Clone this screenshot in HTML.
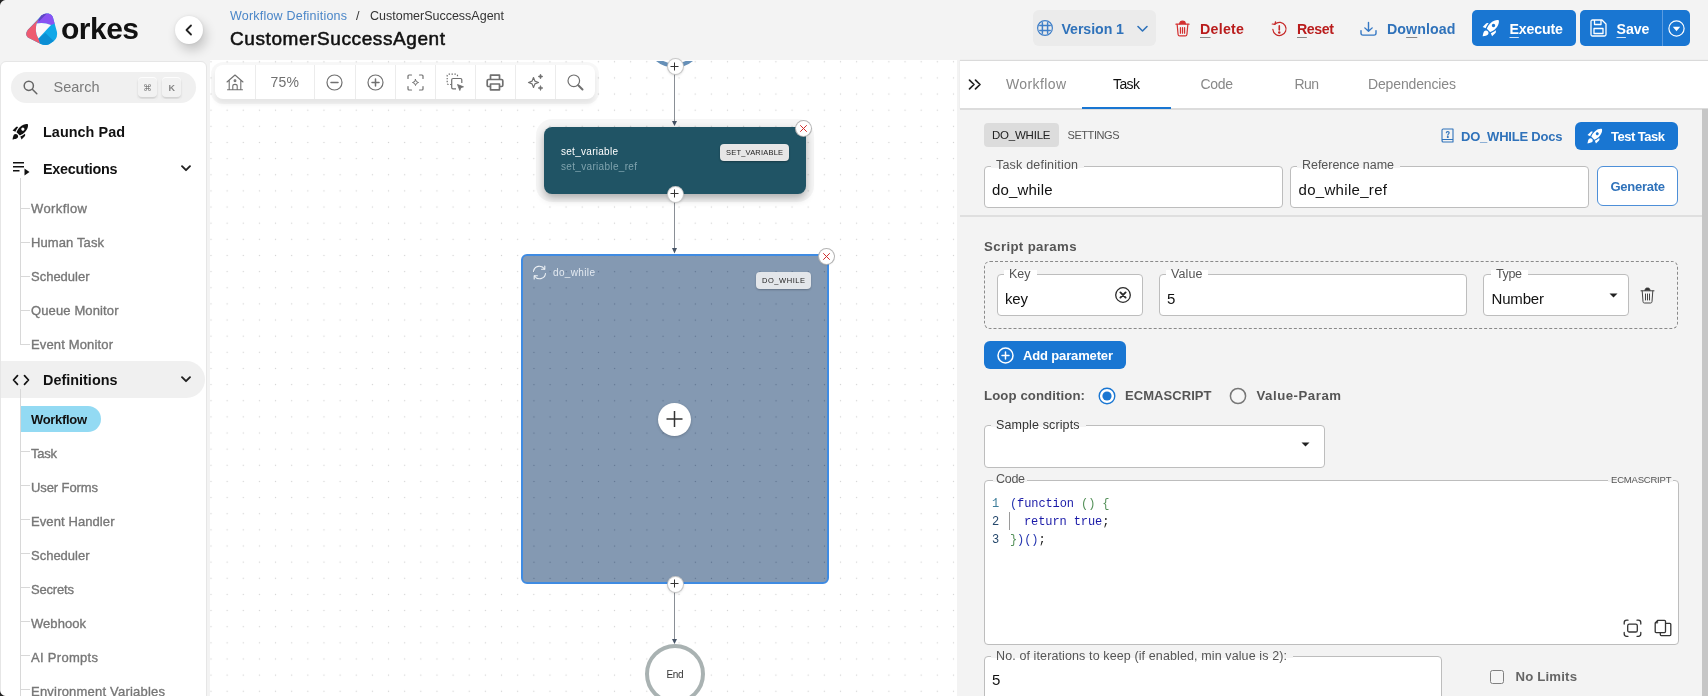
<!DOCTYPE html>
<html lang="en"><head><meta charset="utf-8"><title>CustomerSuccessAgent - Orkes</title>
<style>
*{box-sizing:border-box;margin:0;padding:0}
html,body{width:1708px;height:696px;overflow:hidden;background:#f3f3f3;font-family:"Liberation Sans",sans-serif}
.a{position:absolute}
.t{position:absolute;white-space:nowrap;display:block}
svg{position:absolute;overflow:visible}
#side{left:0;top:61px;width:207px;height:640px;background:#fff;border:1px solid #e6e6e6;border-radius:6px 6px 0 0}
#canvas{left:210px;top:60px;width:747px;height:640px;background-color:#fff;background-image:radial-gradient(circle,#d2d2d2 0.5px,transparent 1px);background-size:16.15px 16.15px;background-position:-7.1px -6.3px;overflow:hidden}
#panel{left:960px;top:61px;width:748px;height:640px;background:#f3f3f3}
#tabs{left:960px;top:61px;width:748px;height:49px;background:#fff;border-bottom:2px solid #dcdcdc;box-shadow:0 -1px 1px rgba(0,0,0,.1)}
.field{position:absolute;background:#fff;border:1px solid #bdbdbd;border-radius:4px}
.lblbg{position:absolute;height:4px}
.btn{position:absolute;background:#1976d2;border-radius:5px}
.circ{position:absolute;border-radius:50%;background:#fff}
#texts{position:absolute;left:0;top:0;width:1708px;height:696px;will-change:transform}
u{text-underline-offset:3px;text-decoration-thickness:1.300px;text-decoration-color:rgba(100,100,100,.75)}

</style></head>
<body>
<!-- header -->
<div class="a" id="hdr" style="left:0;top:0;width:1708px;height:61px;background:#f3f3f3"></div>
<svg style="left:20px;top:8px" width="60" height="44" viewBox="0 0 949 696">
  <path d="M340 120Q390 80 450 88Q515 100 530 180L585 380Q600 460 540 520L460 575Q400 600 320 565L125 465Q70 420 125 345Z" fill="#10a8e8"/>
  <path d="M290 180L340 120Q390 80 450 88Q515 100 530 180L548 250L490 268Q380 225 265 245Z" fill="#8a52f2"/>
  <path d="M290 180L340 120Q380 88 425 87L300 215Z" fill="#6046c2"/>
  <path d="M292 178L125 345Q70 420 125 465L320 565L292 482Q225 370 265 245Z" fill="#ee5a70"/>
  <path d="M292 482L400 395L535 522L460 575Q400 600 320 565Z" fill="#0b8ed4"/>
  <path d="M265 245Q380 225 490 268L292 482Q225 370 265 245Z" fill="#fbf6fa"/>
</svg>
<div class="circ" style="left:175px;top:16px;width:28px;height:28px;box-shadow:3px 6px 12px rgba(0,0,0,.2),0 0 3px rgba(0,0,0,.08)"></div>
<svg style="left:183px;top:23px" width="12" height="14" viewBox="0 0 12 14"><path d="M8 2.500 L3.500 7 L8 11.500" fill="none" stroke="#222" stroke-width="1.800" stroke-linecap="round" stroke-linejoin="round"/></svg>

<!-- header actions -->
<div class="a" style="left:1033px;top:10px;width:123px;height:36px;background:#ebebeb;border-radius:6px"></div>
<svg style="left:1037px;top:20.400px" width="16" height="16" viewBox="0 0 16 16" fill="none" stroke="#3f7fc8" stroke-width="1.200" stroke-linecap="round"><circle cx="8" cy="8" r="7.400"/><path d="M5.400 2.800V13.200M10.600 2.800V13.200M2.800 5.400H13.200M2.800 10.600H13.200" stroke-width="1.500"/></svg>
<svg style="left:1137px;top:25px" width="11" height="8" viewBox="0 0 11 8"><path d="M1 1.500 L5.500 6 L10 1.500" fill="none" stroke="#2f72ba" stroke-width="1.600" stroke-linecap="round" stroke-linejoin="round"/></svg>
<!-- delete icon -->
<svg style="left:1174.500px;top:20px" width="15" height="16.900" viewBox="0 0 16 18" fill="none" stroke="#d32f2f" stroke-width="1.300" stroke-linecap="round" stroke-linejoin="round"><path d="M1 4.500H15"/><path d="M5 4.200C5 1.800 6.500 1.200 8 1.200S11 1.800 11 4.200" fill="#d32f2f"/><path d="M2.300 4.800 L3.300 15.500 C3.400 16.500 4 17 5 17 H11 C12 17 12.600 16.500 12.700 15.500 L13.700 4.800"/><path d="M5.800 8V14M8 8V14M10.200 8V14"/></svg>
<!-- reset icon -->
<svg style="left:1270.500px;top:20.800px" width="16" height="16" viewBox="0 0 17 17" fill="none" stroke="#c62828" stroke-width="1.300" stroke-linecap="round"><path d="M4.200 3.300 A7 7 0 1 1 2 9" /><path d="M4.800 0.800 L4.200 3.600 L1.300 3.200" stroke-linejoin="round"/><path d="M8.800 5.200V9.600" stroke-width="1.700"/><circle cx="8.800" cy="12.300" r="0.700" fill="#c62828"/></svg>
<!-- download icon -->
<svg style="left:1360px;top:20.800px" width="17" height="15.500" viewBox="0 0 17 17" preserveAspectRatio="none" fill="none" stroke="#3578c4" stroke-width="1.400" stroke-linecap="round" stroke-linejoin="round"><path d="M8.500 1.500V11M4.800 7.500 L8.500 11.200 L12.200 7.500"/><path d="M1 10.500V13.500C1 14.800 1.800 15.500 3 15.500H14C15.200 15.500 16 14.800 16 13.500V10.500"/></svg>
<div class="btn" style="left:1472px;top:10px;width:104px;height:36px"></div>
<svg style="left:1481px;top:18px" width="20" height="20" viewBox="0 0 24 24"><path fill="#fff" d="M9.190 6.350c-2.040 2.290-3.440 5.580-3.570 5.890L2 10.690l4.050-4.050c.47-.47 1.150-.68 1.810-.55l1.330.26zM11.170 17s3.740-1.550 5.890-3.700c5.400-5.400 4.500-9.620 4.210-10.570-.95-.3-5.170-1.190-10.570 4.210C8.550 9.090 7 12.830 7 12.830L11.170 17zm6.480-2.190c-2.290 2.040-5.580 3.440-5.890 3.570L13.310 22l4.050-4.050c.47-.47.680-1.150.55-1.810l-.26-1.330zM9 18c0 .830-.340 1.580-.880 2.120C6.940 21.300 2 22 2 22s.7-4.940 1.880-6.120C4.420 15.340 5.170 15 6 15c1.660 0 3 1.340 3 3zm4-9c0-1.100.9-2 2-2s2 .9 2 2-.9 2-2 2-2-.9-2-2z"/></svg>
<div class="btn" style="left:1580px;top:10px;width:110px;height:36px"></div>
<div class="a" style="left:1662px;top:10px;width:1px;height:36px;background:#5a9be0"></div>
<svg style="left:1590px;top:19px" width="17" height="18" viewBox="0 0 17 18" fill="none" stroke="#fff" stroke-width="1.300" stroke-linejoin="round"><path d="M1 2.500C1 1.600 1.600 1 2.500 1H12L16 5V15.500C16 16.400 15.400 17 14.500 17H2.500C1.600 17 1 16.400 1 15.500Z"/><path d="M4.500 1V5.500H11V1"/><rect x="4" y="9.500" width="9" height="5"/></svg>
<svg style="left:1668px;top:20px" width="17" height="17" viewBox="0 0 17 17"><circle cx="8.500" cy="8.500" r="7.600" fill="none" stroke="#fff" stroke-width="1.200"/><path d="M4.800 6.800H12.200L8.500 11.300Z" fill="#fff"/></svg>

<!-- sidebar -->
<div class="a" id="side"></div>
<div class="a" style="left:11px;top:72px;width:185px;height:31px;border-radius:16px;background:#f0f0f0"></div>
<svg style="left:23px;top:80px" width="15" height="15" viewBox="0 0 15 15" fill="none" stroke="#666" stroke-width="1.500" stroke-linecap="round"><circle cx="5.800" cy="5.800" r="4.600"/><path d="M9.300 9.300L13.800 13.800"/></svg>
<div class="a" style="left:138px;top:78px;width:19px;height:19px;border-radius:4px;background:#f2f2f2;box-shadow:0 -1px 0 rgba(255,255,255,.85),0 1.500px 2px rgba(0,0,0,.17),0 3px 1px rgba(255,255,255,.75)"></div>
<div class="a" style="left:162px;top:78px;width:19px;height:19px;border-radius:4px;background:#f2f2f2;box-shadow:0 -1px 0 rgba(255,255,255,.85),0 1.500px 2px rgba(0,0,0,.17),0 3px 1px rgba(255,255,255,.75)"></div>
<!-- launch pad icon -->
<svg style="left:11px;top:122px" width="19" height="19" viewBox="0 0 24 24"><path fill="#111" d="M9.190 6.350c-2.040 2.290-3.440 5.580-3.570 5.890L2 10.690l4.050-4.050c.47-.47 1.150-.68 1.810-.55l1.330.26zM11.170 17s3.740-1.550 5.890-3.700c5.400-5.400 4.500-9.620 4.210-10.570-.95-.3-5.170-1.190-10.570 4.210C8.550 9.090 7 12.830 7 12.830L11.170 17zm6.480-2.190c-2.290 2.040-5.580 3.440-5.890 3.570L13.310 22l4.050-4.050c.47-.47.680-1.150.55-1.810l-.26-1.330zM9 18c0 .830-.340 1.580-.880 2.120C6.940 21.300 2 22 2 22s.7-4.940 1.880-6.120C4.420 15.340 5.170 15 6 15c1.660 0 3 1.340 3 3zm4-9c0-1.100.9-2 2-2s2 .9 2 2-.9 2-2 2-2-.9-2-2z"/></svg>
<!-- executions icon -->
<svg style="left:13px;top:161px" width="17" height="15" viewBox="0 0 17 15"><path d="M0 1.800H11M0 5.800H11M0 9.800H6.500" stroke="#111" stroke-width="1.600" fill="none"/><path d="M11.500 7.500V14.500L16.500 11Z" fill="#111"/></svg>
<svg style="left:180.500px;top:165px" width="10" height="7" viewBox="0 0 10 7"><path d="M1 1.200 L5 5.200 L9 1.200" fill="none" stroke="#222" stroke-width="1.900" stroke-linecap="round" stroke-linejoin="round"/></svg>
<!-- tree lines executions -->
<div class="a" style="left:20px;top:178px;width:1px;height:167px;background:#d8d8d8"></div>
<div class="a" style="left:20px;top:208px;width:10px;height:1px;background:#d8d8d8"></div>
<div class="a" style="left:20px;top:242px;width:10px;height:1px;background:#d8d8d8"></div>
<div class="a" style="left:20px;top:276px;width:10px;height:1px;background:#d8d8d8"></div>
<div class="a" style="left:20px;top:310px;width:10px;height:1px;background:#d8d8d8"></div>
<div class="a" style="left:20px;top:344px;width:10px;height:1px;background:#d8d8d8"></div>
<!-- definitions row -->
<div class="a" style="left:1px;top:361px;width:204px;height:37px;border-radius:0 18.500px 18.500px 0;background:#f0f0f0"></div>
<svg style="left:12px;top:374px" width="18" height="12" viewBox="0 0 18 12" fill="none" stroke="#111" stroke-width="1.700" stroke-linecap="round" stroke-linejoin="round"><path d="M5.500 1.700L1.500 6L5.500 10.300M12.500 1.700L16.500 6L12.500 10.300"/></svg>
<svg style="left:180.500px;top:376px" width="10" height="7" viewBox="0 0 10 7"><path d="M1 1.200 L5 5.200 L9 1.200" fill="none" stroke="#222" stroke-width="1.900" stroke-linecap="round" stroke-linejoin="round"/></svg>
<div class="a" style="left:20px;top:389px;width:1px;height:310px;background:#d8d8d8"></div>
<div class="a" style="left:21px;top:406px;width:80px;height:26px;border-radius:0 13px 13px 0;background:#93daf3"></div>
<div class="a" style="left:20px;top:451px;width:10px;height:1px;background:#d8d8d8"></div>
<div class="a" style="left:20px;top:485px;width:10px;height:1px;background:#d8d8d8"></div>
<div class="a" style="left:20px;top:519px;width:10px;height:1px;background:#d8d8d8"></div>
<div class="a" style="left:20px;top:553px;width:10px;height:1px;background:#d8d8d8"></div>
<div class="a" style="left:20px;top:587px;width:10px;height:1px;background:#d8d8d8"></div>
<div class="a" style="left:20px;top:621px;width:10px;height:1px;background:#d8d8d8"></div>
<div class="a" style="left:20px;top:655px;width:10px;height:1px;background:#d8d8d8"></div>
<div class="a" style="left:20px;top:689px;width:10px;height:1px;background:#d8d8d8"></div>

<!-- canvas -->
<div class="a" id="canvas"></div>
<!-- start node arc -->
<svg style="left:650px;top:61px;overflow:hidden" width="50" height="14" viewBox="650 61 50 14"><circle cx="674.500" cy="38" r="27.500" fill="#fff" stroke="#6690b8" stroke-width="4"/></svg>
<!-- edges -->
<svg style="left:660px;top:61px" width="30" height="600" viewBox="660 61 30 600" fill="none" stroke="#8a8f96" stroke-width="1">
 <path d="M674.500 73V121M674.500 200V248M674.500 591V639"/>
 <path d="M672 121H677L674.500 126Z M672 248H677L674.500 253.500Z M672 639H677L674.500 644Z" fill="#465366" stroke="none"/>
</svg>
<!-- set_variable node -->
<div class="a" style="left:544px;top:127px;width:262px;height:67px;border-radius:8px;background:#205465;box-shadow:0 0 0 8px rgba(0,0,0,.035),0 4px 9px rgba(0,0,0,.3)"></div>
<div class="a" style="left:720px;top:144px;width:69px;height:17px;border-radius:4px;background:#e6e6e6;box-shadow:0 1px 2px rgba(0,0,0,.3)"></div>
<!-- do_while node -->
<div class="a" style="left:521px;top:254px;width:308px;height:330px;border-radius:6px;background-color:rgba(110,135,165,.85);background-image:radial-gradient(circle,rgba(70,90,120,.55) 0.500px,transparent 1px);background-size:16.150px 16.150px;background-position:2.900px 7.650px;border:2px solid #3f8be2"></div>
<div class="a" style="left:756px;top:272px;width:55px;height:17px;border-radius:4px;background:#e3e6ea;box-shadow:0 1px 2px rgba(0,0,0,.25)"></div>
<svg style="left:532px;top:265px" width="15" height="15" viewBox="0 0 15 15" fill="none" stroke="#eef2f6" stroke-width="1.100" stroke-linecap="round" stroke-linejoin="round"><path d="M1.500 6.500A6 6 0 0 1 12.500 4M13.500 8.500A6 6 0 0 1 2.500 11"/><path d="M12.800 1V4.200H9.600M2.200 14V10.800H5.400"/></svg>
<!-- plus buttons -->
<div class="circ" style="left:667.500px;top:59px;width:15px;height:15px;box-shadow:0 0 0 1px #c9c9c9,0 1px 3px rgba(0,0,0,.25)"></div>
<div class="circ" style="left:667.500px;top:186.500px;width:15px;height:15px;box-shadow:0 0 0 1px #c9c9c9,0 1px 3px rgba(0,0,0,.25)"></div>
<div class="circ" style="left:667.500px;top:576.500px;width:15px;height:15px;box-shadow:0 0 0 1px #c9c9c9,0 1px 3px rgba(0,0,0,.25)"></div>
<div class="circ" style="left:658px;top:402.500px;width:33px;height:33px;box-shadow:0 1px 3px rgba(0,0,0,.2)"></div>
<svg style="left:660px;top:55px" width="30" height="540" viewBox="660 55 30 540" fill="none" stroke="#333" stroke-width="1">
 <path d="M670.500 66.500H678.500M674.500 62.500V70.500"/>
 <path d="M670.500 193.500H678.500M674.500 189.500V197.500"/>
 <path d="M670.500 583.500H678.500M674.500 579.500V587.500"/>
 <path d="M666.500 419H682.500M674.500 411V427" stroke-width="1.500"/>
</svg>
<!-- close buttons -->
<div class="circ" style="left:796px;top:121px;width:15px;height:15px;box-shadow:0 0 0 1px #b4b4b4,0 1px 2px rgba(0,0,0,.15)"></div>
<div class="circ" style="left:819px;top:249px;width:15px;height:15px;box-shadow:0 0 0 1px #b4b4b4,0 1px 2px rgba(0,0,0,.15)"></div>
<svg style="left:796px;top:121px" width="40" height="145" viewBox="796 121 40 145" fill="none" stroke="#cf2e2e" stroke-width="1" stroke-linecap="round"><path d="M800.500 125.500L806.500 131.500M806.500 125.500L800.500 131.500M823.500 253.500L829.500 259.500M829.500 253.500L823.500 259.500"/></svg>
<!-- end node -->
<div class="circ" style="left:644.500px;top:644px;width:60px;height:60px;border:4px solid #a9b2b2"></div>
<!-- toolbar -->
<div class="a" style="left:215px;top:65px;width:380px;height:34px;border-radius:8px;background:#fff;box-shadow:0 1px 0 4px rgba(0,0,0,.03),0 5px 5px rgba(0,0,0,.07)"></div>
<div class="a" style="left:255px;top:65px;width:1px;height:34px;background:#ececec"></div>
<div class="a" style="left:314px;top:65px;width:1px;height:34px;background:#ececec"></div>
<div class="a" style="left:355px;top:65px;width:1px;height:34px;background:#ececec"></div>
<div class="a" style="left:395px;top:65px;width:1px;height:34px;background:#ececec"></div>
<div class="a" style="left:435px;top:65px;width:1px;height:34px;background:#ececec"></div>
<div class="a" style="left:475px;top:65px;width:1px;height:34px;background:#ececec"></div>
<div class="a" style="left:515px;top:65px;width:1px;height:34px;background:#ececec"></div>
<div class="a" style="left:555px;top:65px;width:1px;height:34px;background:#ececec"></div>
<!-- toolbar icons -->
<svg style="left:226px;top:74px" width="18" height="17" viewBox="0 0 18 17" fill="none" stroke="#707070" stroke-width="1.100" stroke-linecap="round" stroke-linejoin="round"><path d="M1 8L9 1L17 8M3.200 6.500V15.500M14.800 6.500V15.500M1.500 15.800H16.500M6.800 15.500V12C6.800 9.800 11.200 9.800 11.200 12V15.500"/><circle cx="9" cy="6.800" r="0.900"/></svg>
<svg style="left:326px;top:74px" width="17" height="17" viewBox="0 0 17 17" fill="none" stroke="#707070" stroke-width="1.200" stroke-linecap="round"><circle cx="8.500" cy="8.500" r="7.500"/><path d="M5 8.500H12" stroke-width="1.500"/></svg>
<svg style="left:367px;top:74px" width="17" height="17" viewBox="0 0 17 17" fill="none" stroke="#707070" stroke-width="1.200" stroke-linecap="round"><circle cx="8.500" cy="8.500" r="7.500"/><path d="M5 8.500H12M8.500 5V12" stroke-width="1.500"/></svg>
<svg style="left:407px;top:74px" width="17" height="17" viewBox="0 0 17 17" fill="none" stroke="#707070" stroke-width="1.200" stroke-linecap="round" stroke-linejoin="round"><path d="M1 4.500V2C1 1.400 1.400 1 2 1H4.500M12.500 1H15C15.600 1 16 1.400 16 2V4.500M16 12.500V15C16 15.600 15.600 16 15 16H12.500M4.500 16H2C1.400 16 1 15.600 1 15V12.500"/><path d="M8.500 5.500L9.400 7.600L11.500 8.500L9.400 9.400L8.500 11.500L7.600 9.400L5.500 8.500L7.600 7.600Z" stroke-width="1"/></svg>
<svg style="left:446px;top:73px" width="19" height="19" viewBox="0 0 19 19" fill="none" stroke="#707070" stroke-width="1.200" stroke-linejoin="round"><path d="M5.500 11.500H2.500C1.700 11.500 1.200 11 1.200 10.200V2.500C1.200 1.700 1.700 1.200 2.500 1.200H10.200C11 1.200 11.500 1.700 11.500 2.500V4.500" stroke-dasharray="1.400 1.500"/><path d="M15.800 10V6.800C15.800 6 15.300 5.500 14.500 5.500H7C6.200 5.500 5.700 6 5.700 6.800V14.500C5.700 15.300 6.200 15.800 7 15.800H10"/><path d="M11.500 11.500L17.500 13.800L14.800 14.800L13.800 17.500Z" fill="#707070" stroke-width="0.800"/></svg>
<svg style="left:486px;top:74px" width="18" height="17" viewBox="0 0 18 17" fill="none" stroke="#707070" stroke-width="1.700" stroke-linejoin="round"><path d="M4.500 5V1.200H13.500V5"/><path d="M4.500 12.500H2.500C1.700 12.500 1.200 12 1.200 11.200V6.800C1.200 6 1.700 5.500 2.500 5.500H15.500C16.300 5.500 16.800 6 16.800 6.800V11.200C16.800 12 16.300 12.500 15.500 12.500H13.500"/><rect x="4.500" y="10" width="9" height="5.800"/></svg>
<svg style="left:526px;top:73px" width="19" height="19" viewBox="0 0 19 19" fill="none" stroke="#707070" stroke-width="1.200" stroke-linejoin="round"><path d="M7.500 4.500L8.900 8.100L12.500 9.500L8.900 10.900L7.500 14.500L6.100 10.900L2.500 9.500L6.100 8.100Z"/><path d="M14.500 1L15.200 2.800L17 3.500L15.200 4.200L14.500 6L13.800 4.200L12 3.500L13.800 2.800Z M14.500 12.500L15.200 14.300L17 15L15.200 15.700L14.500 17.500L13.800 15.700L12 15L13.800 14.300Z" fill="#707070" stroke-width="0.600"/></svg>
<svg style="left:567px;top:74px" width="17" height="17" viewBox="0 0 17 17" fill="none" stroke="#707070" stroke-width="1.200" stroke-linecap="round"><circle cx="6.800" cy="6.800" r="5.800"/><path d="M11.200 11.200L15.500 15.500" stroke-width="2"/></svg>

<!-- right panel -->
<div class="a" id="panel"></div>
<div class="a" id="tabs"></div>
<div class="a" style="left:1082px;top:107px;width:89px;height:2px;background:#1976d2"></div>
<svg style="left:968px;top:79px" width="14" height="11" viewBox="0 0 14 11" fill="none" stroke="#222" stroke-width="1.700" stroke-linecap="round" stroke-linejoin="round"><path d="M1.500 1.200L6 5.500L1.500 9.800M7.500 1.200L12 5.500L7.500 9.800"/></svg>
<div class="a" style="left:1702px;top:109px;width:6px;height:600px;background:#c6c6c6"></div>
<div class="a" style="left:984px;top:123px;width:75px;height:24px;border-radius:4px;background:#dcdcdc"></div>
<!-- docs icon -->
<svg style="left:1441px;top:128px" width="13" height="15" viewBox="0 0 13 15" fill="none" stroke="#2f72ba" stroke-width="1.100" stroke-linejoin="round"><path d="M1 2.200C1 1.400 1.500 1 2.200 1H12V11.500H2.200C1.500 11.500 1 12 1 12.700V2.200ZM1 12.700C1 13.500 1.500 14 2.200 14H12V11.500"/><path d="M5.300 4.800C5.300 3.200 8.200 3.200 8.200 4.800C8.200 5.800 6.800 5.900 6.800 7.200" stroke-linecap="round"/><circle cx="6.800" cy="9" r="0.500" fill="#2f72ba"/></svg>
<div class="btn" style="left:1575px;top:121.500px;width:103px;height:28px;border-radius:6px"></div>
<svg style="left:1586px;top:126.500px" width="18" height="18" viewBox="0 0 24 24"><path fill="#fff" d="M9.190 6.350c-2.040 2.290-3.440 5.580-3.570 5.890L2 10.690l4.050-4.050c.47-.47 1.150-.68 1.810-.55l1.330.26zM11.170 17s3.740-1.550 5.890-3.700c5.400-5.400 4.500-9.620 4.210-10.570-.95-.3-5.170-1.190-10.570 4.210C8.550 9.090 7 12.830 7 12.830L11.170 17zm6.480-2.190c-2.290 2.040-5.580 3.440-5.890 3.570L13.310 22l4.050-4.050c.47-.47.680-1.150.55-1.810l-.26-1.330zM9 18c0 .830-.340 1.580-.880 2.120C6.940 21.300 2 22 2 22s.7-4.940 1.880-6.120C4.420 15.340 5.170 15 6 15c1.660 0 3 1.340 3 3zm4-9c0-1.100.9-2 2-2s2 .9 2 2-.9 2-2 2-2-.9-2-2z"/></svg>
<!-- task def / ref name -->
<div class="field" style="left:984px;top:166px;width:299px;height:42px"></div>
<div class="lblbg" style="left:991px;top:164px;width:93px;background:#f3f3f3"></div>
<div class="field" style="left:1290px;top:166px;width:299px;height:42px"></div>
<div class="lblbg" style="left:1297px;top:164px;width:103px;background:#f3f3f3"></div>
<div class="field" style="left:1597px;top:166px;width:81px;height:40px;border-color:#4d8fd8;border-radius:6px"></div>
<div class="a" style="left:960px;top:215px;width:742px;height:2px;background:#dfdfdf"></div>
<!-- script params -->
<div class="a" style="left:984px;top:261px;width:694px;height:68px;border:1px dashed #8a8a8a;border-radius:6px"></div>
<div class="field" style="left:997px;top:274px;width:146px;height:42px"></div>
<div class="lblbg" style="left:1004px;top:270px;width:33px;height:6px;background:#fff"></div>
<div class="field" style="left:1159px;top:274px;width:308px;height:42px"></div>
<div class="lblbg" style="left:1166px;top:270px;width:42px;height:6px;background:#fff"></div>
<div class="field" style="left:1483px;top:274px;width:146px;height:42px"></div>
<div class="lblbg" style="left:1491px;top:270px;width:37px;height:6px;background:#fff"></div>
<svg style="left:1115px;top:287px" width="16" height="16" viewBox="0 0 16 16" fill="none" stroke="#2a2a2a" stroke-width="1.300" stroke-linecap="round"><circle cx="8" cy="8" r="7.300"/><path d="M5.400 5.400L10.600 10.600M10.600 5.400L5.400 10.600" stroke-width="1.900"/></svg>
<svg style="left:1608.500px;top:293px" width="9" height="5" viewBox="0 0 9 5"><path d="M0.500 0.500H8.500L4.500 4.500Z" fill="#222"/></svg>
<svg style="left:1640px;top:286.500px" width="15" height="17" viewBox="0 0 15 17" fill="none" stroke="#3a3a3a" stroke-width="0.950" stroke-linecap="round" stroke-linejoin="round"><path d="M1 3.800H14"/><path d="M5 3.500C5 1.500 6 1 7.500 1S10 1.500 10 3.500" fill="#333"/><path d="M2.200 4L3 14.500C3.100 15.500 3.600 16 4.500 16H10.500C11.400 16 11.900 15.500 12 14.500L12.800 4"/><path d="M5.500 7V13M7.500 7V13M9.500 7V13"/></svg>
<!-- add parameter -->
<div class="btn" style="left:984px;top:341px;width:142px;height:27.500px;border-radius:6px"></div>
<svg style="left:996.500px;top:346.500px" width="17" height="17" viewBox="0 0 17 17" fill="none" stroke="#fff" stroke-width="1.500" stroke-linecap="round"><circle cx="8.500" cy="8.500" r="7.500"/><path d="M5 8.500H12M8.500 5V12"/></svg>
<!-- radios -->
<svg style="left:1098px;top:387px" width="18" height="18" viewBox="0 0 18 18"><circle cx="9" cy="9" r="7.800" fill="#fff" stroke="#1976d2" stroke-width="1.400"/><circle cx="9" cy="9" r="4.600" fill="#1976d2"/></svg>
<svg style="left:1229px;top:387px" width="18" height="18" viewBox="0 0 18 18"><circle cx="9" cy="9" r="7.600" fill="#f6f6f6" stroke="#777" stroke-width="1.500"/></svg>
<!-- sample scripts -->
<div class="field" style="left:984px;top:425px;width:341px;height:43px"></div>
<div class="lblbg" style="left:991px;top:423px;width:95px;background:#f3f3f3"></div>
<svg style="left:1301px;top:442px" width="9" height="5" viewBox="0 0 9 5"><path d="M0.500 0.500H8.500L4.500 4.500Z" fill="#222"/></svg>
<!-- code box -->
<div class="field" style="left:984px;top:480px;width:695px;height:165px"></div>
<div class="lblbg" style="left:993px;top:478px;width:34px;background:#f3f3f3"></div>
<div class="lblbg" style="left:1608px;top:478px;width:65px;background:#f3f3f3"></div>
<div class="a" style="left:1009px;top:512px;width:1px;height:18px;background:#9a9a9a"></div>
<svg style="left:1623px;top:619px" width="19" height="19" viewBox="0 0 19 19" fill="none" stroke="#333" stroke-width="1.300" stroke-linecap="round" stroke-linejoin="round"><path d="M1.200 5V3.700C1.200 2.200 2.200 1.200 3.700 1.200H5M14 1.200H15.300C16.800 1.200 17.800 2.200 17.800 3.700V5M17.800 13.500V14.800C17.800 16.300 16.800 17.300 15.300 17.300H14M5 17.300H3.700C2.200 17.300 1.200 16.300 1.200 14.800V13.500"/><rect x="4.700" y="5.100" width="9.600" height="7.900" rx="1.600"/></svg>
<svg style="left:1654px;top:619px" width="18" height="18" viewBox="0 0 18 18" fill="none" stroke="#333" stroke-width="1.300" stroke-linejoin="round" stroke-linecap="round"><path d="M3.900 1.300H10.500C11.100 1.300 11.500 1.700 11.500 2.300V12.600C11.500 13.200 11.100 13.600 10.500 13.600H2.200C1.600 13.600 1.200 13.200 1.200 12.600V4Z"/><path d="M1.400 3.800L3.700 1.500V3.800Z" fill="#333" stroke-width="0.600"/><path d="M11.700 4.300H15.800C16.400 4.300 16.800 4.700 16.800 5.300V15.600C16.800 16.200 16.400 16.600 15.800 16.600H7.300C6.700 16.600 6.300 16.200 6.300 15.600V13.800"/></svg>
<!-- iterations -->
<div class="field" style="left:984px;top:656px;width:458px;height:50px"></div>
<div class="lblbg" style="left:991px;top:654px;width:302px;background:#f3f3f3"></div>
<div class="a" style="left:1489.500px;top:669.500px;width:14.500px;height:14.500px;border:1.800px solid #808080;border-radius:2.500px;background:#f5f5f5"></div>

<div class="a" style="left:0;top:0;width:6px;height:6px;background:radial-gradient(circle at 6px 6px,transparent 5.500px,#222 6.500px)"></div>
<div class="a" style="left:0;top:690px;width:6px;height:6px;background:radial-gradient(circle at 6px 0,transparent 5.500px,#222 6.500px)"></div>

<div id="texts">
<span class="t" style="left:61px;top:7.5px;height:42px;line-height:42px;font-size:30px;font-weight:700;color:#111;letter-spacing:-0.516px;">orkes</span>
<span class="t" style="left:230px;top:6.5px;height:18px;line-height:18px;font-size:12.5px;font-weight:400;color:#4a86c8;letter-spacing:0.210px;">Workflow Definitions</span>
<span class="t" style="left:356px;top:6.5px;height:18px;line-height:18px;font-size:12.5px;font-weight:400;color:#333;">/</span>
<span class="t" style="left:370px;top:6.5px;height:18px;line-height:18px;font-size:12.5px;font-weight:400;color:#333;letter-spacing:-0.005px;">CustomerSuccessAgent</span>
<span class="t" style="left:230px;top:25.0px;height:27px;line-height:27px;font-size:19px;font-weight:400;color:#111;letter-spacing:0.588px;-webkit-text-stroke:0.55px #111;">CustomerSuccessAgent</span>
<span class="t" style="left:1061.5px;top:19.2px;height:20px;line-height:20px;font-size:14.2px;font-weight:700;color:#2f72ba;letter-spacing:-0.074px;">Version 1</span>
<span class="t" style="left:1200px;top:19.2px;height:20px;line-height:20px;font-size:14.2px;font-weight:700;color:#b91c1c;letter-spacing:0.281px;"><u>D</u>elete</span>
<span class="t" style="left:1297px;top:19.2px;height:20px;line-height:20px;font-size:14.2px;font-weight:700;color:#b91c1c;letter-spacing:-0.414px;"><u>R</u>eset</span>
<span class="t" style="left:1387px;top:19.2px;height:20px;line-height:20px;font-size:14.2px;font-weight:700;color:#2f72ba;letter-spacing:0.098px;">Do<u>w</u>nload</span>
<span class="t" style="left:1509.5px;top:19.2px;height:20px;line-height:20px;font-size:14.2px;font-weight:700;color:#fff;letter-spacing:-0.154px;"><u style="text-decoration-color:#d5e4f6">E</u>xecute</span>
<span class="t" style="left:1616.5px;top:19.2px;height:20px;line-height:20px;font-size:14.2px;font-weight:700;color:#fff;letter-spacing:-0.047px;"><u style="text-decoration-color:#d5e4f6">S</u>ave</span>
<span class="t" style="left:53.5px;top:77.2px;height:20px;line-height:20px;font-size:14.5px;font-weight:400;color:#7a7a7a;letter-spacing:0.009px;">Search</span>
<span class="t" style="left:143px;top:81.8px;height:13px;line-height:13px;font-size:9px;font-weight:400;color:#7a7a7a;">&#8984;</span>
<span class="t" style="left:168.5px;top:81.8px;height:13px;line-height:13px;font-size:9px;font-weight:700;color:#858585;">K</span>
<span class="t" style="left:43px;top:121.5px;height:20px;line-height:20px;font-size:14.4px;font-weight:700;color:#111;letter-spacing:0.049px;">Launch Pad</span>
<span class="t" style="left:43px;top:158.5px;height:20px;line-height:20px;font-size:14.4px;font-weight:700;color:#111;letter-spacing:-0.253px;">Executions</span>
<span class="t" style="left:31px;top:200.0px;height:18px;line-height:18px;font-size:13px;font-weight:400;color:#777;letter-spacing:0.397px;-webkit-text-stroke:0.35px #777;">Workflow</span>
<span class="t" style="left:31px;top:234.0px;height:18px;line-height:18px;font-size:13px;font-weight:400;color:#777;letter-spacing:0.109px;-webkit-text-stroke:0.35px #777;">Human Task</span>
<span class="t" style="left:31px;top:268.0px;height:18px;line-height:18px;font-size:13px;font-weight:400;color:#777;letter-spacing:-0.006px;-webkit-text-stroke:0.35px #777;">Scheduler</span>
<span class="t" style="left:31px;top:302.0px;height:18px;line-height:18px;font-size:13px;font-weight:400;color:#777;letter-spacing:0.125px;-webkit-text-stroke:0.35px #777;">Queue Monitor</span>
<span class="t" style="left:31px;top:336.0px;height:18px;line-height:18px;font-size:13px;font-weight:400;color:#777;letter-spacing:0.150px;-webkit-text-stroke:0.35px #777;">Event Monitor</span>
<span class="t" style="left:43px;top:369.5px;height:20px;line-height:20px;font-size:14.4px;font-weight:700;color:#111;letter-spacing:0.014px;">Definitions</span>
<span class="t" style="left:31px;top:411.0px;height:18px;line-height:18px;font-size:13px;font-weight:700;color:#111;letter-spacing:-0.324px;">Workflow</span>
<span class="t" style="left:31px;top:445.0px;height:18px;line-height:18px;font-size:13px;font-weight:400;color:#777;letter-spacing:-0.245px;-webkit-text-stroke:0.35px #777;">Task</span>
<span class="t" style="left:31px;top:479.0px;height:18px;line-height:18px;font-size:13px;font-weight:400;color:#777;letter-spacing:-0.099px;-webkit-text-stroke:0.35px #777;">User Forms</span>
<span class="t" style="left:31px;top:513.0px;height:18px;line-height:18px;font-size:13px;font-weight:400;color:#777;letter-spacing:0.092px;-webkit-text-stroke:0.35px #777;">Event Handler</span>
<span class="t" style="left:31px;top:547.0px;height:18px;line-height:18px;font-size:13px;font-weight:400;color:#777;letter-spacing:-0.006px;-webkit-text-stroke:0.35px #777;">Scheduler</span>
<span class="t" style="left:31px;top:581.0px;height:18px;line-height:18px;font-size:13px;font-weight:400;color:#777;letter-spacing:-0.180px;-webkit-text-stroke:0.35px #777;">Secrets</span>
<span class="t" style="left:31px;top:615.0px;height:18px;line-height:18px;font-size:13px;font-weight:400;color:#777;letter-spacing:0.052px;-webkit-text-stroke:0.35px #777;">Webhook</span>
<span class="t" style="left:31px;top:649.0px;height:18px;line-height:18px;font-size:13px;font-weight:400;color:#777;letter-spacing:0.300px;-webkit-text-stroke:0.35px #777;">AI Prompts</span>
<span class="t" style="left:31px;top:683.0px;height:18px;line-height:18px;font-size:13px;font-weight:400;color:#777;letter-spacing:0.209px;-webkit-text-stroke:0.35px #777;">Environment Variables</span>
<span class="t" style="left:270.5px;top:72.3px;height:20px;line-height:20px;font-size:14px;font-weight:400;color:#707070;letter-spacing:0.234px;">75%</span>
<span class="t" style="left:561px;top:144.5px;height:14px;line-height:14px;font-size:10px;font-weight:400;color:#fff;letter-spacing:0.280px;">set_variable</span>
<span class="t" style="left:561px;top:159.5px;height:14px;line-height:14px;font-size:10px;font-weight:400;color:#7fa3ae;letter-spacing:0.323px;">set_variable_ref</span>
<span class="t" style="left:726px;top:148.0px;height:10px;line-height:10px;font-size:7.5px;font-weight:400;color:#222;letter-spacing:0.192px;">SET_VARIABLE</span>
<span class="t" style="left:553px;top:265.5px;height:14px;line-height:14px;font-size:10px;font-weight:400;color:#e4eaf1;letter-spacing:0.359px;">do_while</span>
<span class="t" style="left:762px;top:275.5px;height:10px;line-height:10px;font-size:7.5px;font-weight:400;color:#222;letter-spacing:0.545px;">DO_WHILE</span>
<span class="t" style="left:666.5px;top:667.7px;height:14px;line-height:14px;font-size:10px;font-weight:400;color:#333;letter-spacing:-0.398px;">End</span>
<span class="t" style="left:1006px;top:74.3px;height:20px;line-height:20px;font-size:14px;font-weight:400;color:#888;letter-spacing:0.384px;">Workflow</span>
<span class="t" style="left:1113px;top:74.3px;height:20px;line-height:20px;font-size:14px;font-weight:400;color:#111;letter-spacing:-0.599px;">Task</span>
<span class="t" style="left:1200.5px;top:74.3px;height:20px;line-height:20px;font-size:14px;font-weight:400;color:#888;letter-spacing:-0.323px;">Code</span>
<span class="t" style="left:1294.5px;top:74.3px;height:20px;line-height:20px;font-size:14px;font-weight:400;color:#888;letter-spacing:-0.594px;">Run</span>
<span class="t" style="left:1368px;top:74.3px;height:20px;line-height:20px;font-size:14px;font-weight:400;color:#888;letter-spacing:-0.138px;">Dependencies</span>
<span class="t" style="left:992px;top:126.8px;height:16px;line-height:16px;font-size:11.5px;font-weight:400;color:#222;letter-spacing:-0.225px;">DO_WHILE</span>
<span class="t" style="left:1067.5px;top:128.3px;height:15px;line-height:15px;font-size:11px;font-weight:400;color:#555;letter-spacing:-0.431px;">SETTINGS</span>
<span class="t" style="left:1461px;top:127.7px;height:18px;line-height:18px;font-size:13px;font-weight:700;color:#2f72ba;letter-spacing:-0.210px;">DO_WHILE Docs</span>
<span class="t" style="left:1611px;top:127.7px;height:18px;line-height:18px;font-size:13px;font-weight:700;color:#fff;letter-spacing:-0.506px;">Test Task</span>
<span class="t" style="left:996px;top:155.8px;height:18px;line-height:18px;font-size:12.5px;font-weight:400;color:#555;letter-spacing:0.199px;">Task definition</span>
<span class="t" style="left:992px;top:178.8px;height:21px;line-height:21px;font-size:15px;font-weight:400;color:#111;letter-spacing:0.183px;">do_while</span>
<span class="t" style="left:1302px;top:155.8px;height:18px;line-height:18px;font-size:12.5px;font-weight:400;color:#555;letter-spacing:-0.032px;">Reference name</span>
<span class="t" style="left:1298.5px;top:178.8px;height:21px;line-height:21px;font-size:15px;font-weight:400;color:#111;letter-spacing:0.312px;">do_while_ref</span>
<span class="t" style="left:1610.5px;top:178.3px;height:18px;line-height:18px;font-size:13px;font-weight:700;color:#2f72ba;letter-spacing:-0.268px;">Generate</span>
<span class="t" style="left:984px;top:238.0px;height:18px;line-height:18px;font-size:13.2px;font-weight:700;color:#555;letter-spacing:0.378px;">Script params</span>
<span class="t" style="left:1009px;top:265.0px;height:18px;line-height:18px;font-size:12.5px;font-weight:400;color:#555;letter-spacing:-0.023px;">Key</span>
<span class="t" style="left:1005px;top:287.8px;height:21px;line-height:21px;font-size:15px;font-weight:400;color:#111;letter-spacing:-0.172px;">key</span>
<span class="t" style="left:1171px;top:265.0px;height:18px;line-height:18px;font-size:12.5px;font-weight:400;color:#555;letter-spacing:0.113px;">Value</span>
<span class="t" style="left:1167px;top:287.8px;height:21px;line-height:21px;font-size:15px;font-weight:400;color:#111;">5</span>
<span class="t" style="left:1496px;top:265.0px;height:18px;line-height:18px;font-size:12.5px;font-weight:400;color:#555;letter-spacing:-0.370px;">Type</span>
<span class="t" style="left:1491.5px;top:287.5px;height:21px;line-height:21px;font-size:15px;font-weight:400;color:#111;letter-spacing:-0.172px;">Number</span>
<span class="t" style="left:1023px;top:346.6px;height:18px;line-height:18px;font-size:13px;font-weight:700;color:#fff;letter-spacing:-0.146px;">Add parameter</span>
<span class="t" style="left:984px;top:386.6px;height:18px;line-height:18px;font-size:13.2px;font-weight:700;color:#555;letter-spacing:0.099px;">Loop condition:</span>
<span class="t" style="left:1125px;top:386.6px;height:18px;line-height:18px;font-size:13px;font-weight:700;color:#555;letter-spacing:0.061px;">ECMASCRIPT</span>
<span class="t" style="left:1256.5px;top:386.6px;height:18px;line-height:18px;font-size:13.2px;font-weight:700;color:#555;letter-spacing:0.533px;">Value-Param</span>
<span class="t" style="left:996px;top:415.6px;height:18px;line-height:18px;font-size:12.5px;font-weight:400;color:#333;letter-spacing:0.117px;">Sample scripts</span>
<span class="t" style="left:996px;top:470.3px;height:18px;line-height:18px;font-size:12.5px;font-weight:400;color:#555;letter-spacing:-0.297px;">Code</span>
<span class="t" style="left:1611px;top:473.3px;height:13px;line-height:13px;font-size:9.5px;font-weight:400;color:#555;letter-spacing:-0.200px;">ECMASCRIPT</span>
<span class="t" style="left:996px;top:646.5px;height:18px;line-height:18px;font-size:12.5px;font-weight:400;color:#555;letter-spacing:0.113px;">No. of iterations to keep (if enabled, min value is 2):</span>
<span class="t" style="left:992px;top:668.8px;height:21px;line-height:21px;font-size:15px;font-weight:400;color:#111;">5</span>
<span class="t" style="left:1515.5px;top:667.6px;height:18px;line-height:18px;font-size:13.2px;font-weight:700;color:#666;letter-spacing:0.178px;">No Limits</span>
<span class="t" style="left:992px;top:495.5px;height:17px;line-height:17px;font-size:12px;font-weight:400;color:#3d7d9a;font-family:'Liberation Mono',monospace;letter-spacing:-0.1px;">1</span>
<span class="t" style="left:992px;top:513.5px;height:17px;line-height:17px;font-size:12px;font-weight:400;color:#24476b;font-family:'Liberation Mono',monospace;letter-spacing:-0.1px;">2</span>
<span class="t" style="left:992px;top:531.5px;height:17px;line-height:17px;font-size:12px;font-weight:400;color:#24476b;font-family:'Liberation Mono',monospace;letter-spacing:-0.1px;">3</span>
<span class="t" style="left:1010px;top:495.5px;height:17px;line-height:17px;font-size:12px;font-weight:400;color:#222;font-family:'Liberation Mono',monospace;letter-spacing:-0.1px;"><span style="color:#2536b0">(</span><span style="color:#1a1aa8">function</span> <span style="color:#55915a">()</span> <span style="color:#55915a">{</span></span>
<span class="t" style="left:1024px;top:513.5px;height:17px;line-height:17px;font-size:12px;font-weight:400;color:#222;font-family:'Liberation Mono',monospace;letter-spacing:-0.1px;"><span style="color:#1a1aa8">return</span> <span style="color:#1a1aa8">true</span>;</span>
<span class="t" style="left:1010px;top:531.5px;height:17px;line-height:17px;font-size:12px;font-weight:400;color:#222;font-family:'Liberation Mono',monospace;letter-spacing:-0.1px;"><span style="color:#55915a">}</span><span style="color:#2536b0">)()</span>;</span>
</div>
</body></html>
